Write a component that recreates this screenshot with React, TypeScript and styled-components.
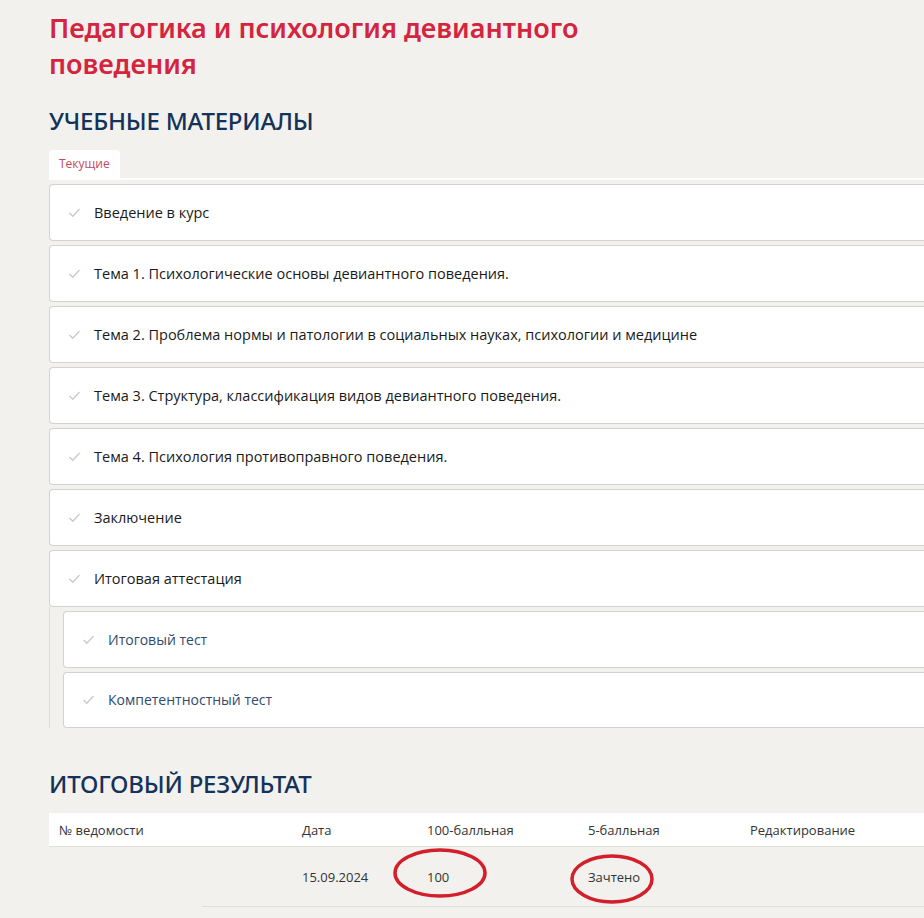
import React from "react";
import styled, { createGlobalStyle } from "styled-components";

const Global = createGlobalStyle`
  html, body { margin: 0; padding: 0; background: #f2f1ee; }
  body { font-family: "Open Sans", "Noto Sans", sans-serif; overflow: hidden; }
`;

const Page = styled.div`
  padding: 10px 0 0 49px;
  width: 1000px;
`;

const Title = styled.h1`
  margin: 0;
  font-family: "Noto Sans", sans-serif;
  font-weight: 600;
  font-size: 27px;
  line-height: 36px;
  color: #d4243e;
  width: 580px;
`;

const SectionTitle = styled.h2<{ $mt: number }>`
  margin: ${(p) => p.$mt}px 0 0;
  font-family: "Noto Sans", sans-serif;
  font-weight: 500;
  font-size: 24px;
  line-height: 30px;
  color: #14335a;
  letter-spacing: -0.2px;
`;

const TabBar = styled.div`
  margin-top: 14px;
  display: flex;
  border-bottom: 2px solid #ffffff;
`;

const Tab = styled.div`
  background: #fff;
  border-radius: 4px 4px 0 0;
  padding: 0 10px;
  height: 28px;
  line-height: 28px;
  font-size: 12px;
  color: #c44a5c;
`;

const List = styled.div`
  margin-top: 4px;
  display: flex;
  flex-direction: column;
  gap: 4px;
`;

const Card = styled.div<{ $sub?: boolean }>`
  height: 55px;
  background: #fff;
  border: 1px solid #d3d2d0;
  border-right: none;
  border-radius: 4px 0 0 4px;
  display: flex;
  align-items: center;
  padding-left: 18px;
  gap: 13px;
  font-size: ${(p) => (p.$sub ? "14px" : "14.5px")};
  color: ${(p) => (p.$sub ? "#2f4b6e" : "#1a1a1a")};
  font-weight: ${(p) => (p.$sub ? 400 : 500)};
`;

const Check = styled.svg`
  width: 13px;
  height: 13px;
  flex: none;
`;

const SubGroup = styled.div`
  display: flex;
  flex-direction: column;
  gap: 4px;
  padding: 4px 0 0 13px;
  margin-top: -4px;
  border-left: 1px solid #dcdad6;
  height: 121px;
  overflow: hidden;
  box-sizing: border-box;
`;

const Table = styled.div`
  margin-top: 14px;
  width: 1000px;
  font-size: 13px;
  color: #333;
`;

const Row = styled.div<{ $head?: boolean }>`
  display: grid;
  grid-template-columns: 253px 125px 161px 162px 1fr;
  align-items: center;
  height: ${(p) => (p.$head ? "33px" : "59px")};
  background: ${(p) => (p.$head ? "#fff" : "transparent")};
  border-bottom: 1px solid #e1dfdb;
  ${(p) => (p.$head ? "" : "margin-left: 153px; grid-template-columns: 100px 125px 161px 162px 1fr;")}
`;

const Cell = styled.div<{ $pl?: number }>`
  padding-left: ${(p) => p.$pl ?? 0}px;
  position: relative;
`;

const Ellipse = styled.svg`
  position: absolute;
  pointer-events: none;
`;

const CheckIcon = () => (
  <Check viewBox="0 0 13 13">
    <path d="M1.5 7 L4.8 10.2 L11.5 3" fill="none" stroke="#c9c9c9" strokeWidth="1.3" />
  </Check>
);

const items = [
  "Введение в курс",
  "Тема 1. Психологические основы девиантного поведения.",
  "Тема 2. Проблема нормы и патологии в социальных науках, психологии и медицине",
  "Тема 3. Структура, классификация видов девиантного поведения.",
  "Тема 4. Психология противоправного поведения.",
  "Заключение",
  "Итоговая аттестация",
];

const subs = ["Итоговый тест", "Компетентностный тест"];

export default function App() {
  return (
    <Page>
      <Global />
      <Title>Педагогика и психология девиантного поведения</Title>
      <SectionTitle $mt={24}>УЧЕБНЫЕ МАТЕРИАЛЫ</SectionTitle>
      <TabBar>
        <Tab>Текущие</Tab>
      </TabBar>
      <List>
        {items.map((t) => (
          <Card key={t}>
            <CheckIcon />
            {t}
          </Card>
        ))}
        <SubGroup>
          {subs.map((t) => (
            <Card key={t} $sub>
              <CheckIcon />
              {t}
            </Card>
          ))}
        </SubGroup>
      </List>
      <SectionTitle $mt={41}>ИТОГОВЫЙ РЕЗУЛЬТАТ</SectionTitle>
      <Table>
        <Row $head>
          <Cell $pl={10}>№ ведомости</Cell>
          <Cell>Дата</Cell>
          <Cell>100-балльная</Cell>
          <Cell>5-балльная</Cell>
          <Cell>Редактирование</Cell>
        </Row>
        <Row>
          <Cell />
          <Cell>15.09.2024</Cell>
          <Cell>
            100
            <Ellipse width="96" height="52" viewBox="0 0 96 52" style={{ left: -35, top: -21 }}>
              <ellipse cx="48" cy="26" rx="45" ry="23" fill="none" stroke="#d21f2b" strokeWidth="3.5" />
            </Ellipse>
          </Cell>
          <Cell>
            Зачтено
            <Ellipse width="86" height="52" viewBox="0 0 86 52" style={{ left: -19, top: -15 }}>
              <ellipse cx="43" cy="26" rx="40" ry="23" fill="none" stroke="#d21f2b" strokeWidth="3.5" />
            </Ellipse>
          </Cell>
          <Cell />
        </Row>
      </Table>
    </Page>
  );
}
